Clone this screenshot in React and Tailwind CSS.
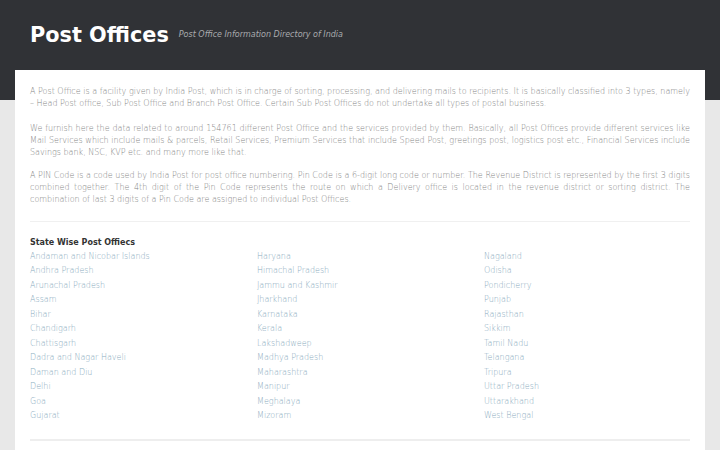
import React from "react";

const col1 = ["Andaman and Nicobar Islands","Andhra Pradesh","Arunachal Pradesh","Assam","Bihar","Chandigarh","Chattisgarh","Dadra and Nagar Haveli","Daman and Diu","Delhi","Goa","Gujarat"];
const col2 = ["Haryana","Himachal Pradesh","Jammu and Kashmir","Jharkhand","Karnataka","Kerala","Lakshadweep","Madhya Pradesh","Maharashtra","Manipur","Meghalaya","Mizoram"];
const col3 = ["Nagaland","Odisha","Pondicherry","Punjab","Rajasthan","Sikkim","Tamil Nadu","Telangana","Tripura","Uttar Pradesh","Uttarakhand","West Bengal"];

function Col({ items }) {
  return (
    <div className="flex flex-col">
      {items.map((s) => (
        <a key={s} className="text-[8px] font-extralight leading-[14.45px] text-[#8aabbe]">{s}</a>
      ))}
    </div>
  );
}

export default function App() {
  return (
    <div className="min-h-[450px] bg-[#e8e8e8]" style={{ fontFamily: '"DejaVu Sans", Verdana, sans-serif' }}>
      <div className="h-[100px] bg-[#303236]">
        <div className="flex items-center gap-[10px] px-[30px] pt-[20px]">
          <h1 className="text-[20.8px] font-bold leading-[30px] text-white">Post Offices</h1>
          <span className="text-[8px] italic text-[#a9abae]">Post Office Information Directory of India</span>
        </div>
      </div>
      <div className="mx-[15px] -mt-[30px] bg-white px-[15px] pt-[16px] pb-[10px]">
        <div className="text-justify text-[8px] font-extralight leading-[12px] text-[#858585]">
          <p>A Post Office is a facility given by India Post, which is in charge of sorting, processing, and delivering mails to recipients. It is basically classified into 3 types, namely – Head Post office, Sub Post Office and Branch Post Office. Certain Sub Post Offices do not undertake all types of postal business.</p>
          <p className="mt-[13px]">We furnish here the data related to around 154761 different Post Office and the services provided by them. Basically, all Post Offices provide different services like Mail Services which include mails &amp; parcels, Retail Services, Premium Services that include Speed Post, greetings post, logistics post etc., Financial Services include Savings bank, NSC, KVP etc. and many more like that.</p>
          <p className="mt-[11px]">A PIN Code is a code used by India Post for post office numbering. Pin Code is a 6-digit long code or number. The Revenue District is represented by the first 3 digits combined together. The 4th digit of the Pin Code represents the route on which a Delivery office is located in the revenue district or sorting district. The combination of last 3 digits of a Pin Code are assigned to individual Post Offices.</p>
        </div>
        <div className="mt-[15px] h-px bg-[#f0f0f0]" />
        <h3 className="mt-[15px] text-[8px] font-bold leading-[12px] text-[#333]">State Wise Post Offiecs</h3>
        <div className="mt-[1px] grid grid-cols-[227px_227px_1fr]">
          <Col items={col1} />
          <Col items={col2} />
          <Col items={col3} />
        </div>
        <div className="mt-[16px] h-[2px] bg-[#eeeeee]" />
      </div>
    </div>
  );
}
